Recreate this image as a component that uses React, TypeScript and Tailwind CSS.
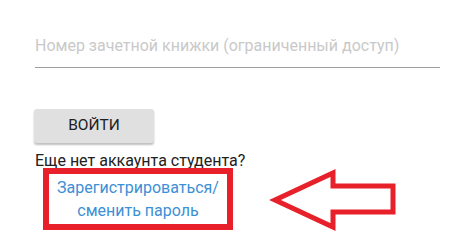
import React from 'react';

function ArrowMark() {
  return (
    <svg
      className="absolute left-[268px] top-[166px]"
      width="132"
      height="68"
      viewBox="268 166 132 68"
      fill="none"
    >
      <path
        d="M275 200 L333 173 L333 186 L393 186 L393 212 L333 212 L333 227 Z"
        stroke="#e8202a"
        strokeWidth="5"
        strokeLinejoin="miter"
      />
    </svg>
  );
}

export default function App() {
  return (
    <div
      className="relative w-[467px] h-[243px] bg-white overflow-hidden"
      style={{ fontFamily: 'Roboto, "Liberation Sans", sans-serif' }}
    >
      <div className="flex flex-col pl-[35px] pt-[34px]">
        <div className="w-[405px] border-b border-[#9e9e9e] pb-[9px]">
          <span className="block text-[16px] leading-6 text-[#c9c9c9]">
            Номер зачетной книжки (ограниченный доступ)
          </span>
        </div>

        <button className="mt-[41px] -ml-px flex h-[34px] w-[120px] items-center justify-center rounded-[3px] bg-[#e0e0e0] text-[15.5px] text-[#212121] shadow-[0_2px_2px_rgba(0,0,0,0.25)]">
          ВОЙТИ
        </button>

        <p className="mt-[8px] text-[16px] leading-5 text-[#212121]">
          Еще нет аккаунта студента?
        </p>

        <div className="relative -mt-[3px] ml-[8px] flex h-[62px] w-[190px] flex-col items-center border-[6px] border-[#e8202a] pt-[2px]">
          <a href="#" className="text-center text-[16px] leading-[23px] text-[#3d8fd6]">
            Зарегистрироваться/
            <br />
            сменить пароль
          </a>
        </div>
      </div>
      <ArrowMark />
    </div>
  );
}
